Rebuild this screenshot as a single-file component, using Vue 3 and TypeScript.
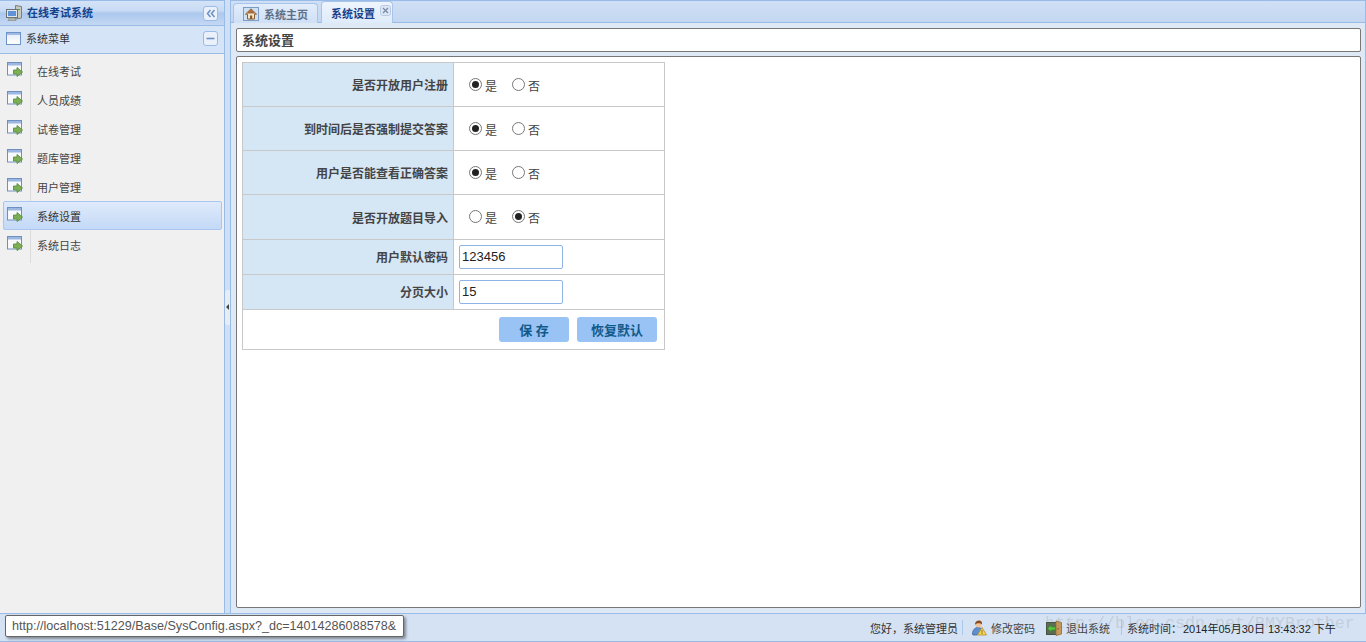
<script setup lang="ts">
const menu = ['在线考试', '人员成绩', '试卷管理', '题库管理', '用户管理', '系统设置', '系统日志']
const radios = [
  { label: '是否开放用户注册', yes: true, h: 44 },
  { label: '到时间后是否强制提交答案', yes: true, h: 44 },
  { label: '用户是否能查看正确答案', yes: true, h: 44 },
  { label: '是否开放题目导入', yes: false, h: 45 },
]
</script>

<template>
  <div class="app">
    <div class="main">
      <aside class="side">
        <div class="side-title">
          <svg class="ico16" viewBox="0 0 16 16" width="16" height="16">
            <path d="M9.500 .5 15.500 1.500V13L9.500 14z" fill="#c6c9bf" stroke="#7d7f78" />
            <rect x="12" y="4" width="2" height="1" fill="#5aa04a" />
            <rect x=".5" y="4.500" width="11" height="8" fill="#dfe6ee" stroke="#6d7276" />
            <rect x="2" y="6" width="8" height="5" fill="#5f93d6" />
            <path d="M3 13h6l1 2.500H2z" fill="#b5b8b2" stroke="#85877f" stroke-width=".6" />
          </svg>
          <span class="side-title-text">在线考试系统</span>
          <span class="tool"><svg viewBox="0 0 11 11" width="11" height="11"><path d="M5.500 2 2.500 5.500 5.500 9M9.500 2 6.500 5.500 9.500 9" fill="none" stroke="#6b8fc4" stroke-width="1.500" /></svg></span>
        </div>
        <div class="side-sub">
          <svg class="ico-win" viewBox="0 0 15 13" width="15" height="13"><defs><linearGradient id="winG" x1="0" y1="0" x2="0" y2="1"><stop offset="0" stop-color="#e4ecf8" /><stop offset="1" stop-color="#fff" /></linearGradient></defs><rect x=".5" y=".5" width="14" height="12" fill="url(#winG)" stroke="#6f93c4" /><rect x="1" y="1" width="13" height="2" fill="#9dbbe6" /></svg>
          <span class="side-sub-text">系统菜单</span>
          <span class="tool"><svg viewBox="0 0 11 11" width="11" height="11"><path d="M1.500 5.500h8" stroke="#6b8fc4" stroke-width="1.600" /></svg></span>
        </div>
        <div class="menu">
          <div v-for="m in menu" :key="m" class="item" :class="{ on: m === '系统设置' }">
            <svg class="item-ico" viewBox="0 0 16 15" width="16" height="15">
              <rect x=".5" y=".5" width="14" height="12.500" fill="#f7f9fd" stroke="#6f8fc0" />
              <rect x="1" y="1" width="13" height="2.500" fill="#9db8e0" />
              <path d="M6.500 8H10V5.500L15.500 10 10 14.500V12H6.500z" fill="#7db055" stroke="#5a8f3c" stroke-width=".9" />
            </svg>
            <span class="item-text">{{ m }}</span>
          </div>
        </div>
      </aside>
      <div class="split"><span class="split-btn"></span></div>
      <section class="content">
        <div class="tabs">
          <div class="tab">
            <svg viewBox="0 0 16 14" width="16" height="14"><rect x=".5" y=".5" width="15" height="13" fill="#cfe0f3" stroke="#7c9cc8" /><path d="M8 1.800 2.500 7.200h2V12h7V7.200h2z" fill="#f0e6c8" stroke="#8a5a30" /><path d="M3.500 6.500 8 2.500l4.500 4z" fill="#a86a3a" /><rect x="7" y="8.500" width="2.200" height="3.500" fill="#8a5a30" /></svg>
            <span>系统主页</span>
          </div>
          <div class="tab active">
            <span>系统设置</span>
            <span class="close"><svg viewBox="0 0 11 11" width="11" height="11"><rect x=".5" y=".5" width="10" height="10" rx="2" fill="#dce7f5" stroke="#b7cbe6" /><path d="M3 3l5 5M8 3l-5 5" stroke="#7a8aa5" stroke-width="1.300" /></svg></span>
          </div>
        </div>
        <div class="body">
          <div class="head">系统设置</div>
          <div class="panel">
            <table class="form">
              <tbody>
                <tr v-for="r in radios" :key="r.label" :class="{ tall: r.h === 45 }" :style="{ height: r.h + 'px' }">
                  <th>{{ r.label }}</th>
                  <td>
                    <span class="radio-group">
                      <span class="radio" :class="{ sel: r.yes }"></span><span class="rlabel">是</span>
                      <span class="radio second" :class="{ sel: !r.yes }"></span><span class="rlabel">否</span>
                    </span>
                  </td>
                </tr>
                <tr class="row35"><th>用户默认密码</th><td><input class="inp" value="123456" /></td></tr>
                <tr class="row35"><th>分页大小</th><td><input class="inp" value="15" /></td></tr>
                <tr class="row-btn">
                  <td colspan="2">
                    <div class="btns"><button class="btn save">保 存</button><button class="btn">恢复默认</button></div>
                  </td>
                </tr>
              </tbody>
            </table>
          </div>
        </div>
      </section>
    </div>
    <footer class="status">
      <span class="s-text">您好，系统管理员</span>
      <span class="sep"></span>
      <svg class="s-ico" viewBox="0 0 16 16" width="16" height="16"><path d="M1.500 14c0-4 2.500-6.500 5.500-6.500s4 2 4 3L6 15H2z" fill="#5f8fd0" stroke="#3f659c" stroke-width=".8" /><circle cx="7.500" cy="4.500" r="3" fill="#f0c49a" /><path d="M4 4.500C4 1.500 6 .5 8 .5s3.500 1.500 3 4C10 3 7 3 6 3.500 5 4 4.500 4.500 4 4.500z" fill="#8a4a20" /><path d="M11 7.500 15.500 15h-9z" fill="#f5d95a" stroke="#b58a25" stroke-width=".8" /><rect x="10.500" y="10" width="1" height="2.800" fill="#8a6a20" /><rect x="10.500" y="13" width="1" height="1" fill="#8a6a20" /></svg>
      <span class="s-text link">修改密码</span>
      <svg class="s-ico exit" viewBox="0 0 16 16" width="16" height="16"><rect x=".5" y="2.500" width="10" height="12" fill="#5b6b52" stroke="#46533f" /><path d="M10 1l5.500 1.500v11.500L10 15.500z" fill="#c9995a" stroke="#8f6a35" stroke-width=".8" /><rect x="11.500" y="8" width="1" height="1.500" fill="#6d4a20" /><path d="M1.500 8.500 5.500 5v2h4v3h-4v2z" fill="#58c43f" stroke="#2f8a25" stroke-width=".6" /></svg>
      <span class="s-text link2">退出系统</span>
      <span class="sep sep2"></span>
      <span class="s-text">系统时间：</span>
      <span class="s-time">2014年05月30日 13:43:32 下午</span>
      <span class="wm">http://blog.csdn.net/BMYBrother</span>
      <div class="tip">http://localhost:51229/Base/SysConfig.aspx?_dc=14014286088578&amp;</div>
    </footer>
  </div>
</template>

<style>
html, body { margin: 0; padding: 0; overflow: hidden; }
</style>

<style scoped>
.app {
  width: 1366px;
  height: 642px;
  display: flex;
  flex-direction: column;
  background: #cfe0f5;
  font-family: "Liberation Sans", "Noto Sans CJK SC", sans-serif;
  font-size: 12px;
  color: #333;
  overflow: hidden;
  box-sizing: border-box;
}
.main { flex: 1; display: flex; min-height: 0; }
.side {
  width: 224px;
  flex: none;
  border-right: 1px solid #99bbe8;
  border-top: 1px solid #99bbe8;
  display: flex;
  flex-direction: column;
  background: #f0f0f0;
  box-sizing: content-box;
}
.side-title {
  height: 24px;
  display: flex;
  align-items: center;
  padding-left: 6px;
  background: linear-gradient(#d4e3f7 0, #c8dbf4 40%, #acc8ee 52%, #c4d8f3 100%);
  border-bottom: 1px solid #99bbe8;
}
.side-title-text { margin-left: 5px; margin-top: -2px; font-weight: bold; color: #15428b; font-size: 11px; }
.tool {
  margin-left: auto;
  margin-right: 6px;
  width: 13px;
  height: 13px;
  background: #eaf1fb;
  border: 1px solid #99bbe8;
  border-radius: 3px;
  display: flex;
  align-items: center;
  justify-content: center;
}
.side-sub {
  height: 24px;
  display: flex;
  align-items: center;
  padding: 0 0 3px 6px;
  background: #d6e4f8;
  border-bottom: 1px solid #99bbe8;
}
.ico-win { flex: none; }
.side-sub-text { margin-left: 5px; font-size: 11px; color: #333; }
.menu {
  position: relative;
  padding: 2px 2px 0 3px;
  flex: 1;
}
.menu::before {
  content: "";
  position: absolute;
  left: 30px;
  top: 2px;
  width: 1px;
  height: 207px;
  background: #dcdcdc;
}
.item {
  position: relative;
  height: 29px;
  box-sizing: border-box;
  display: flex;
  align-items: flex-start;
  padding-left: 4px;
  padding-top: 6px;
}
.item.on {
  background: linear-gradient(#dfeafb, #c3d9f6);
  border: 1px solid #a9c6ee;
  border-radius: 2px;
  padding-left: 3px;
  padding-top: 5px;
}
.item-ico { flex: none; }
.item-text { margin-left: 14px; padding-top: 3px; font-size: 11px; color: #444; line-height: 14px; }
.item.on .item-text { color: #333; }
.split {
  width: 5px;
  flex: none;
  position: relative;
  background: #cfe0f5;
}
.split-btn {
  position: absolute;
  left: 0;
  top: 290px;
  width: 5px;
  height: 35px;
  background: #e8edf3;
  border-radius: 3px 0 0 3px;
}
.split-btn::after {
  content: "";
  position: absolute;
  left: 1px;
  top: 14px;
  border-style: solid;
  border-width: 3px 3px 3px 0;
  border-color: transparent #444 transparent transparent;
}
.content {
  flex: 1;
  min-width: 0;
  border-left: 1px solid #99bbe8;
  border-right: 1px solid #99bbe8;
  border-top: 1px solid #99bbe8;
  display: flex;
  flex-direction: column;
}
.tabs {
  height: 21px;
  display: flex;
  align-items: flex-end;
  padding-left: 2px;
  gap: 3px;
  background: linear-gradient(#cfdff5, #c4d7f1);
  border-bottom: 1px solid #99bbe8;
  flex: none;
}
.tab {
  height: 20px;
  box-sizing: border-box;
  border: 1px solid #a9c4ea;
  border-bottom: none;
  border-radius: 4px 4px 0 0;
  background: linear-gradient(#e3edfb, #cedff6);
  display: flex;
  align-items: center;
  padding: 0 9px;
  font-size: 11px;
  font-weight: bold;
  color: #5e6f88;
  gap: 5px;
  margin-bottom: -1px;
}
.tab.active {
  background: linear-gradient(#eff5fd, #deebfa);
  color: #15428b;
  padding: 0 1px 0 9px;
  gap: 5px;
  height: 22px;
}
.close { display: flex; margin-bottom: 4px; }
.body {
  flex: 1;
  min-height: 0;
  background: #dfe9f6;
  padding: 5px 4px 5px 5px;
  display: flex;
  flex-direction: column;
  gap: 4px;
}
.head {
  height: 24px;
  flex: none;
  box-sizing: border-box;
  background: #fff;
  border: 1px solid #777;
  border-radius: 2px;
  padding-left: 5px;
  font-size: 13px;
  font-weight: bold;
  color: #444;
  line-height: 23px;
}
.panel {
  flex: 1;
  min-height: 0;
  background: #fff;
  border: 1px solid #777;
  border-radius: 2px;
  padding: 5px;
  box-sizing: border-box;
}
.form {
  border-collapse: collapse;
  width: 423px;
  table-layout: fixed;
}
.form th, .form td { border: 1px solid #c8c8c8; padding: 0; }
.form th {
  width: 205px;
  background: #d5e6f5;
  text-align: right;
  padding-right: 5px;
  font-size: 12px;
  color: #444;
  font-weight: bold;
}
.form .row35 th { padding-bottom: 2px; }
.form .tall td { padding-bottom: 1px; }
.radio-group { display: flex; align-items: center; padding-left: 15px; }
.radio {
  width: 11px;
  height: 11px;
  border: 1px solid #777;
  border-radius: 50%;
  background: #fff;
  position: relative;
  flex: none;
}
.radio.sel::after {
  content: "";
  position: absolute;
  left: 2px;
  top: 2px;
  width: 7px;
  height: 7px;
  border-radius: 50%;
  background: #222;
}
.rlabel { margin-left: 3px; margin-top: 2px; font-size: 12px; color: #444; }
.second { margin-left: 15px; }
.row35 { height: 35px; }
.inp {
  display: block;
  margin-left: 5px;
  width: 104px;
  height: 24px;
  box-sizing: border-box;
  border: 1px solid #8fb5e8;
  border-radius: 2px;
  padding: 0 2px 2px;
  font: 13px "Liberation Sans", sans-serif;
  color: #222;
  outline: none;
}
.row-btn { height: 40px; }
.btns { display: flex; justify-content: flex-end; gap: 8px; padding-right: 7px; }
.btn {
  width: 80px;
  height: 25px;
  border: none;
  border-radius: 3px;
  background: #99c2f5;
  color: #0f5a8a;
  font: bold 13px "Liberation Sans", "Noto Sans CJK SC", sans-serif;
  padding: 0;
}
.btn.save { width: 70px; }
.status {
  height: 29px;
  flex: none;
  position: relative;
  display: flex;
  align-items: center;
  box-sizing: border-box;
  padding-left: 870px;
  border-top: 1px solid #99bbe8;
  border-bottom: 1px solid #99bbe8;
  background: #d4e2f4;
  font-size: 11px;
}
.s-text { color: #333; white-space: nowrap; }
.sep { width: 1px; height: 15px; background: #a9c6ee; margin: 0 8px 0 4px; flex: none; }
.s-ico { flex: none; }
.link { margin-left: 4px; color: #444; }
.exit { margin-left: 11px; }
.link2 { margin-left: 4px; color: #444; }
.sep2 { margin: 0 5px 0 11px; }
.s-time { white-space: nowrap; color: #222; margin-left: 1px; }
.wm {
  position: absolute;
  left: 1045px;
  top: 0;
  font-family: "Liberation Mono", monospace;
  font-size: 16.67px;
  color: rgba(120, 120, 120, .2);
  white-space: nowrap;
}
.tip {
  position: absolute;
  left: 5px;
  top: 1px;
  width: 399px;
  height: 22px;
  box-sizing: border-box;
  background: #fff;
  border: 1px solid #666;
  border-radius: 2px;
  box-shadow: 2px 2px 3px rgba(0, 0, 0, .4);
  padding-left: 6px;
  font-size: 12.6px;
  line-height: 20px;
  color: #555;
  white-space: nowrap;
  overflow: hidden;
}
</style>
